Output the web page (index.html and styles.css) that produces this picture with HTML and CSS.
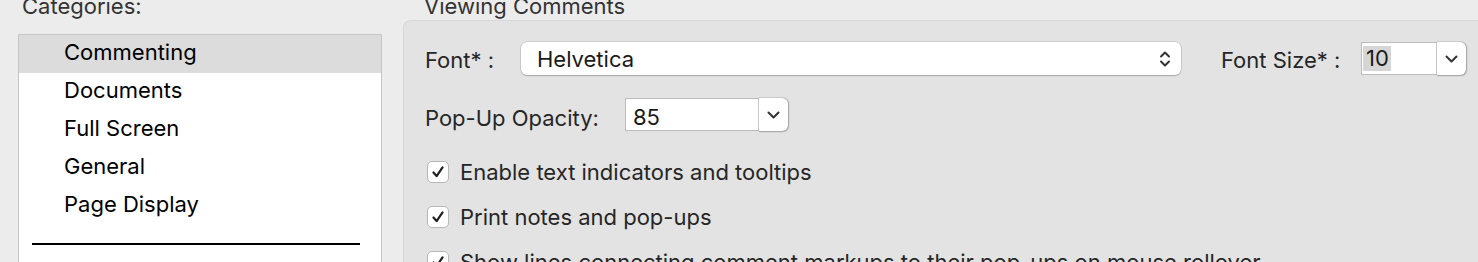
FILE: index.html
```html
<!DOCTYPE html>
<html lang="en">
<head>
    <meta charset="UTF-8">
    <title>Preferences - Commenting</title>
    <link rel="stylesheet" href="styles.css">
</head>
<body>
    <div class="sidebar">
        <div class="heading">Categories:</div>
        <div class="list">
            <div class="item selected">Commenting</div>
            <div class="item">Documents</div>
            <div class="item">Full Screen</div>
            <div class="item">General</div>
            <div class="item">Page Display</div>
            <div class="sep"></div>
        </div>
    </div>

    <div class="panel">
        <div class="heading panel-heading">Viewing Comments</div>
        <div class="group">
            <div class="row">
                <span class="label font-label">Font* :</span>
                <div class="popup">
                    <span>Helvetica</span>
                    <svg class="stepper" width="12" height="20" viewBox="0 0 12 20">
                        <path d="M2 7.5 L6 3.5 L10 7.5" fill="none" stroke="#333" stroke-width="2" stroke-linecap="round" stroke-linejoin="round"/>
                        <path d="M2 12.5 L6 16.5 L10 12.5" fill="none" stroke="#333" stroke-width="2" stroke-linecap="round" stroke-linejoin="round"/>
                    </svg>
                </div>
                <span class="label size-label">Font Size* :</span>
                <div class="combo size-combo">
                    <div class="field"><span class="selected-text">10</span></div>
                    <div class="arrow">
                        <svg width="13" height="8" viewBox="0 0 13 8"><path d="M1.5 1.5 L6.5 6.5 L11.5 1.5" fill="none" stroke="#333" stroke-width="2" stroke-linecap="round" stroke-linejoin="round"/></svg>
                    </div>
                </div>
            </div>

            <div class="row row-2">
                <span class="label opacity-label">Pop-Up Opacity:</span>
                <div class="combo opacity-combo">
                    <div class="field">85</div>
                    <div class="arrow">
                        <svg width="13" height="8" viewBox="0 0 13 8"><path d="M1.5 1.5 L6.5 6.5 L11.5 1.5" fill="none" stroke="#333" stroke-width="2" stroke-linecap="round" stroke-linejoin="round"/></svg>
                    </div>
                </div>
            </div>

            <div class="checks">
                <label class="check">
                    <span class="box"><svg width="22" height="22" viewBox="0 0 22 22"><path d="M6 11.5 L9.5 15.5 L16 6" fill="none" stroke="#1f1f1f" stroke-width="2.4" stroke-linecap="round" stroke-linejoin="round"/></svg></span>
                    Enable text indicators and tooltips
                </label>
                <label class="check">
                    <span class="box"><svg width="22" height="22" viewBox="0 0 22 22"><path d="M6 11.5 L9.5 15.5 L16 6" fill="none" stroke="#1f1f1f" stroke-width="2.4" stroke-linecap="round" stroke-linejoin="round"/></svg></span>
                    Print notes and pop-ups
                </label>
                <label class="check">
                    <span class="box"><svg width="22" height="22" viewBox="0 0 22 22"><path d="M6 11.5 L9.5 15.5 L16 6" fill="none" stroke="#1f1f1f" stroke-width="2.4" stroke-linecap="round" stroke-linejoin="round"/></svg></span>
                    Show lines connecting comment markups to their pop-ups on mouse rollover
                </label>
            </div>
        </div>
    </div>
</body>
</html>
```

FILE: styles.css
```css
body {
    margin: 0;
    height: 262px;
    overflow: hidden;
    background: #ececec;
    font-family: Inter, "Noto Sans", sans-serif;
    font-size: 22px;
    color: #262626;
    display: flex;
}
.sidebar {
    width: 364px;
    padding-left: 18px;
    flex-shrink: 0;
    display: flex;
    flex-direction: column;
}
.heading {
    height: 34px;
    margin-top: -11px;
    padding-left: 4px;
    line-height: 34px;
    color: #333;
}
.list {
    margin-top: 11px;
    flex: 1;
    background: #fff;
    border: 1px solid #c6c6c6;
    border-bottom: none;
}
.item {
    height: 38px;
    line-height: 34px;
    padding-left: 45px;
    color: #000;
}
.item.selected {
    background: #dcdcdc;
}
.sep {
    margin: 18px 0 0 13px;
    width: 328px;
    height: 2px;
    background: #000;
}
.panel {
    margin-left: 21px;
    flex: 1;
    display: flex;
    flex-direction: column;
}
.panel-heading {
    padding-left: 21px;
    margin-top: -11px;
    margin-bottom: -3px;
}
.group {
    flex: 1;
    background: #e3e3e3;
    border: 1px solid #d8d8d8;
    border-right: none;
    border-bottom: none;
    border-radius: 8px 0 0 0;
    padding: 21px 0 0 21px;
}
.row {
    display: flex;
    align-items: center;
    height: 33px;
}
.row-2 {
    margin-top: 23px;
}
.label {
    flex-shrink: 0;
    padding-top: 3px;
}
.font-label {
    width: 96px;
}
.size-label {
    margin-left: 40px;
    width: 140px;
}
.opacity-label {
    width: 200px;
    padding-top: 6px;
}
.popup {
    width: 660px;
    height: 33px;
    box-sizing: border-box;
    background: #fff;
    border-radius: 6px;
    box-shadow: 0 0 0 0.5px rgba(0, 0, 0, 0.18), 0 1px 1.5px rgba(0, 0, 0, 0.2);
    display: flex;
    align-items: center;
    justify-content: space-between;
    padding: 0 10px 0 16px;
    color: #1a1a1a;
}
.stepper {
    display: block;
}
.combo {
    height: 33px;
    display: flex;
}
.size-combo {
    width: 105px;
}
.opacity-combo {
    width: 163px;
}
.field {
    flex: 1;
    box-sizing: border-box;
    background: #fff;
    border: 1px solid #bcbcbc;
    border-right: 1px solid #e0e0e0;
    padding-left: 7px;
    line-height: 31px;
    color: #1a1a1a;
}
.opacity-combo .field {
    line-height: 37px;
}
.size-combo .field {
    padding: 3px 0 0 1px;
    line-height: 25px;
}
.selected-text {
    display: inline-block;
    background: #d6d6d6;
    padding: 0 2px 0 3px;
}
.arrow {
    width: 29px;
    background: #fff;
    border-radius: 0 6px 6px 0;
    box-shadow: 0.5px 0.5px 1.5px rgba(0, 0, 0, 0.25), 0 0 0 0.5px rgba(0, 0, 0, 0.12);
    display: flex;
    align-items: center;
    justify-content: center;
}
.checks {
    margin-top: 30px;
    display: flex;
    flex-direction: column;
    gap: 23px;
}
.check {
    display: flex;
    align-items: center;
    height: 22px;
    white-space: nowrap;
}
.box {
    width: 22px;
    height: 22px;
    box-sizing: border-box;
    margin: 0 11px 0 2px;
    background: #fff;
    border: 1px solid #b8b8b8;
    border-radius: 5px;
    display: flex;
    align-items: center;
    justify-content: center;
    flex-shrink: 0;
}
.box svg {
    display: block;
}
```
